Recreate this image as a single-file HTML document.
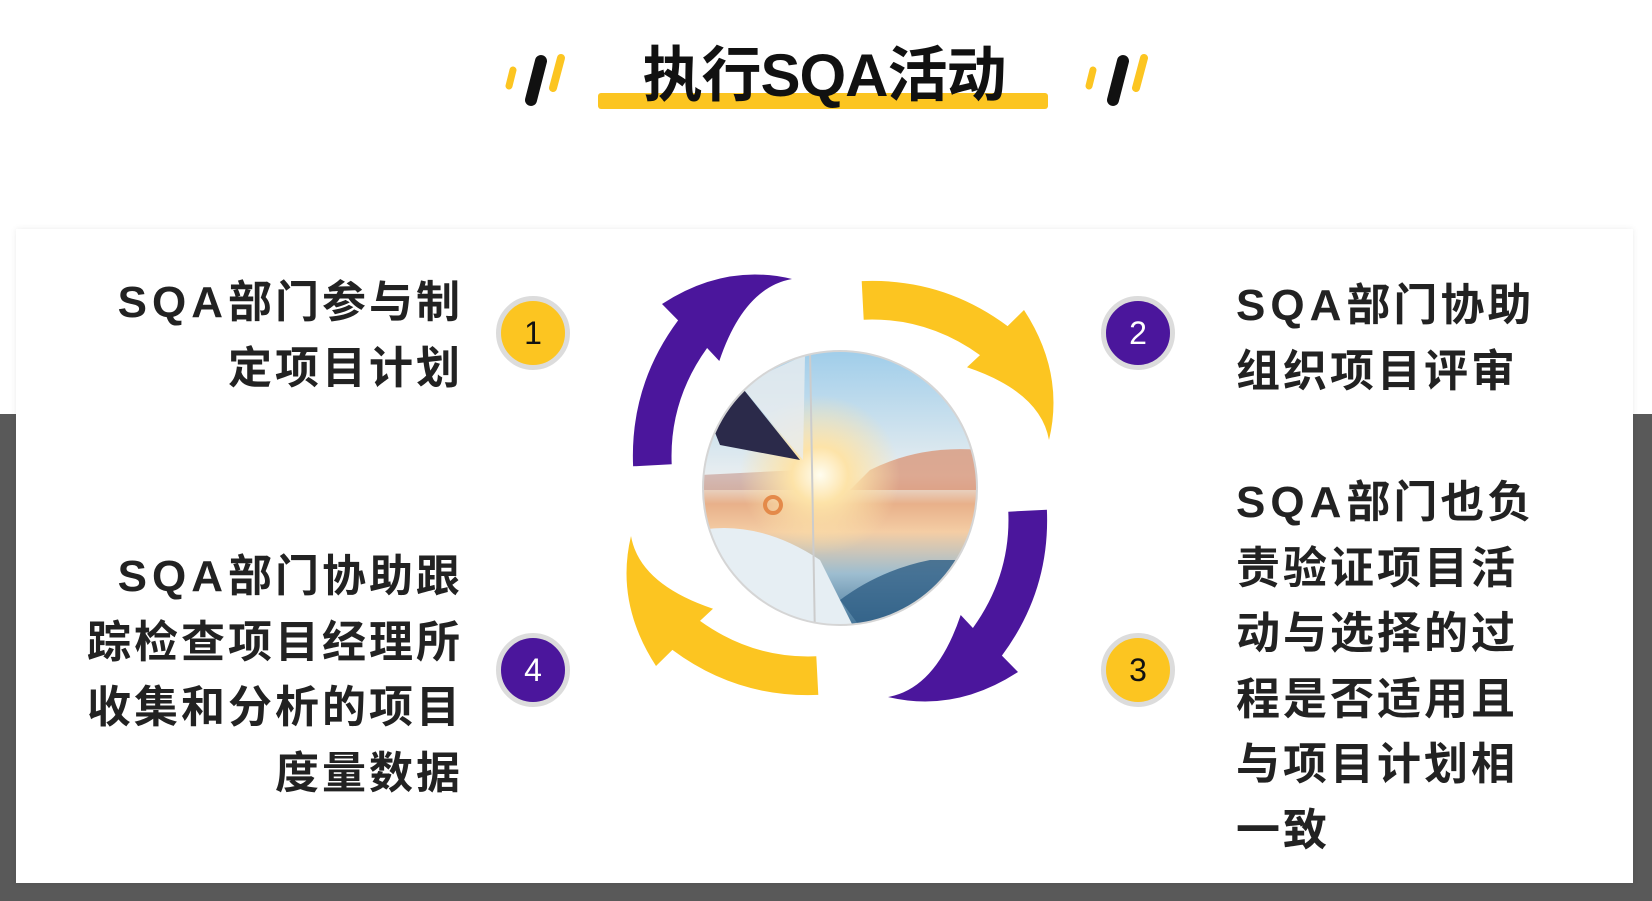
<!DOCTYPE html>
<html><head><meta charset="utf-8"><style>
*{margin:0;padding:0;box-sizing:border-box}
body{width:1652px;height:901px;position:relative;background:#fff;overflow:hidden;font-family:"Liberation Sans","Noto Sans CJK SC",sans-serif}
.gray{position:absolute;left:0;top:414px;width:1652px;height:487px;background:#595959}
.card{position:absolute;left:16px;top:229px;width:1617px;height:654px;background:#fff;box-shadow:0 0 6px rgba(0,0,0,.08)}
.title{position:absolute;left:600px;top:40px;width:448px;text-align:center;font-size:60px;font-weight:bold;color:#111;line-height:72px;letter-spacing:-1px}
.bar{position:absolute;left:598px;top:93px;width:450px;height:16px;background:#FCC521;border-radius:3px}
.t{position:absolute;font-size:44px;font-weight:bold;color:#222;line-height:65.5px;letter-spacing:3px;white-space:nowrap}
.t span{letter-spacing:5px}
.r{text-align:right}
.num{position:absolute;width:74px;height:74px;border-radius:50%;border:5px solid #dcdcdc;text-align:center;line-height:64px;font-size:32px;color:#111}
.y{background:#FCC521}.p{background:#4B169C;color:#fff}
</style></head><body>
<div class="gray"></div>
<div class="card"></div>
<svg style="position:absolute;left:0;top:0" width="1652" height="901">
<g stroke-linecap="round">
<line x1="513" y1="70" x2="509" y2="86" stroke="#FCC521" stroke-width="7"/>
<line x1="541" y1="61" x2="531" y2="100" stroke="#111" stroke-width="12"/>
<line x1="561" y1="58" x2="553" y2="88" stroke="#FCC521" stroke-width="8"/>
<line x1="1093" y1="70" x2="1089" y2="86" stroke="#FCC521" stroke-width="7"/>
<line x1="1123" y1="61" x2="1113" y2="100" stroke="#111" stroke-width="12"/>
<line x1="1144" y1="58" x2="1136" y2="88" stroke="#FCC521" stroke-width="8"/>
</g>
</svg>
<div class="bar"></div>
<div class="title">执行SQA活动</div>

<svg style="position:absolute;left:0;top:0" width="1652" height="901">
<defs>
<path id="arr" d="M-206.9,-21.7 Q-210.3,-102.6 -161.9,-167.6 L-178,-184 Q-115,-225 -48,-209 Q-96,-200.5 -120.7,-127 L-132.9,-140 Q-171,-87 -168.3,-23.7 Z"/>
<radialGradient id="sun" cx="0.5" cy="0.5" r="0.5">
<stop offset="0" stop-color="#fffdf0"/><stop offset="0.35" stop-color="#fde3a8"/><stop offset="1" stop-color="#fde3a8" stop-opacity="0"/>
</radialGradient>
<linearGradient id="sky" x1="0" y1="0" x2="0" y2="1">
<stop offset="0" stop-color="#9fcdea"/><stop offset="0.45" stop-color="#e9eef0"/><stop offset="0.55" stop-color="#e8b08a"/><stop offset="0.65" stop-color="#f4cda4"/><stop offset="0.8" stop-color="#9dbdd0"/><stop offset="1" stop-color="#3d6f94"/>
</linearGradient>
<clipPath id="cc"><circle cx="840" cy="488" r="137"/></clipPath>
</defs>
<g transform="translate(840,488)">
<use href="#arr" fill="#4B169C"/>
<use href="#arr" fill="#FCC521" transform="rotate(90)"/>
<use href="#arr" fill="#4B169C" transform="rotate(180)"/>
<use href="#arr" fill="#FCC521" transform="rotate(270)"/>
</g>
<g clip-path="url(#cc)">
<rect x="700" y="350" width="280" height="280" fill="url(#sky)"/>
<path d="M870,470 Q920,445 980,450 L980,490 L850,490 Z" fill="#d9977a" opacity="0.8"/>
<path d="M700,475 L800,470 L800,490 L700,490Z" fill="#c9a39a" opacity="0.7"/>
<circle cx="820" cy="475" r="80" fill="url(#sun)"/>
<path d="M700,530 Q760,520 820,560 L860,640 L700,640 Z" fill="#e6eef3"/>
<path d="M840,600 Q880,570 930,560 L980,560 L980,640 L870,640 Z" fill="#2f5f86" opacity="0.8"/>
<path d="M710,420 L740,385 L800,460 L720,445 Z" fill="#2b2a4a"/>
<path d="M740,385 L805,355 L803,460 Z" fill="#e8ecef" opacity="0.8"/>
<line x1="810" y1="350" x2="815" y2="640" stroke="#ccc" stroke-width="2"/>
<circle cx="773" cy="505" r="8" fill="none" stroke="#e48a4a" stroke-width="4"/>
</g>
<circle cx="840" cy="488" r="137" fill="none" stroke="#d5d5d5" stroke-width="2"/>
</svg>

<div class="t r" style="right:1189px;top:270px"><span>SQA</span>部门参与制<br>定项目计划</div>
<div class="t r" style="right:1189px;top:544px"><span>SQA</span>部门协助跟<br>踪检查项目经理所<br>收集和分析的项目<br>度量数据</div>
<div class="t" style="left:1236px;top:273px"><span>SQA</span>部门协助<br>组织项目评审</div>
<div class="t" style="left:1236px;top:470px"><span>SQA</span>部门也负<br>责验证项目活<br>动与选择的过<br>程是否适用且<br>与项目计划相<br>一致</div>

<div class="num y" style="left:496px;top:296px">1</div>
<div class="num p" style="left:1101px;top:296px">2</div>
<div class="num y" style="left:1101px;top:633px">3</div>
<div class="num p" style="left:496px;top:633px">4</div>
</body></html>
